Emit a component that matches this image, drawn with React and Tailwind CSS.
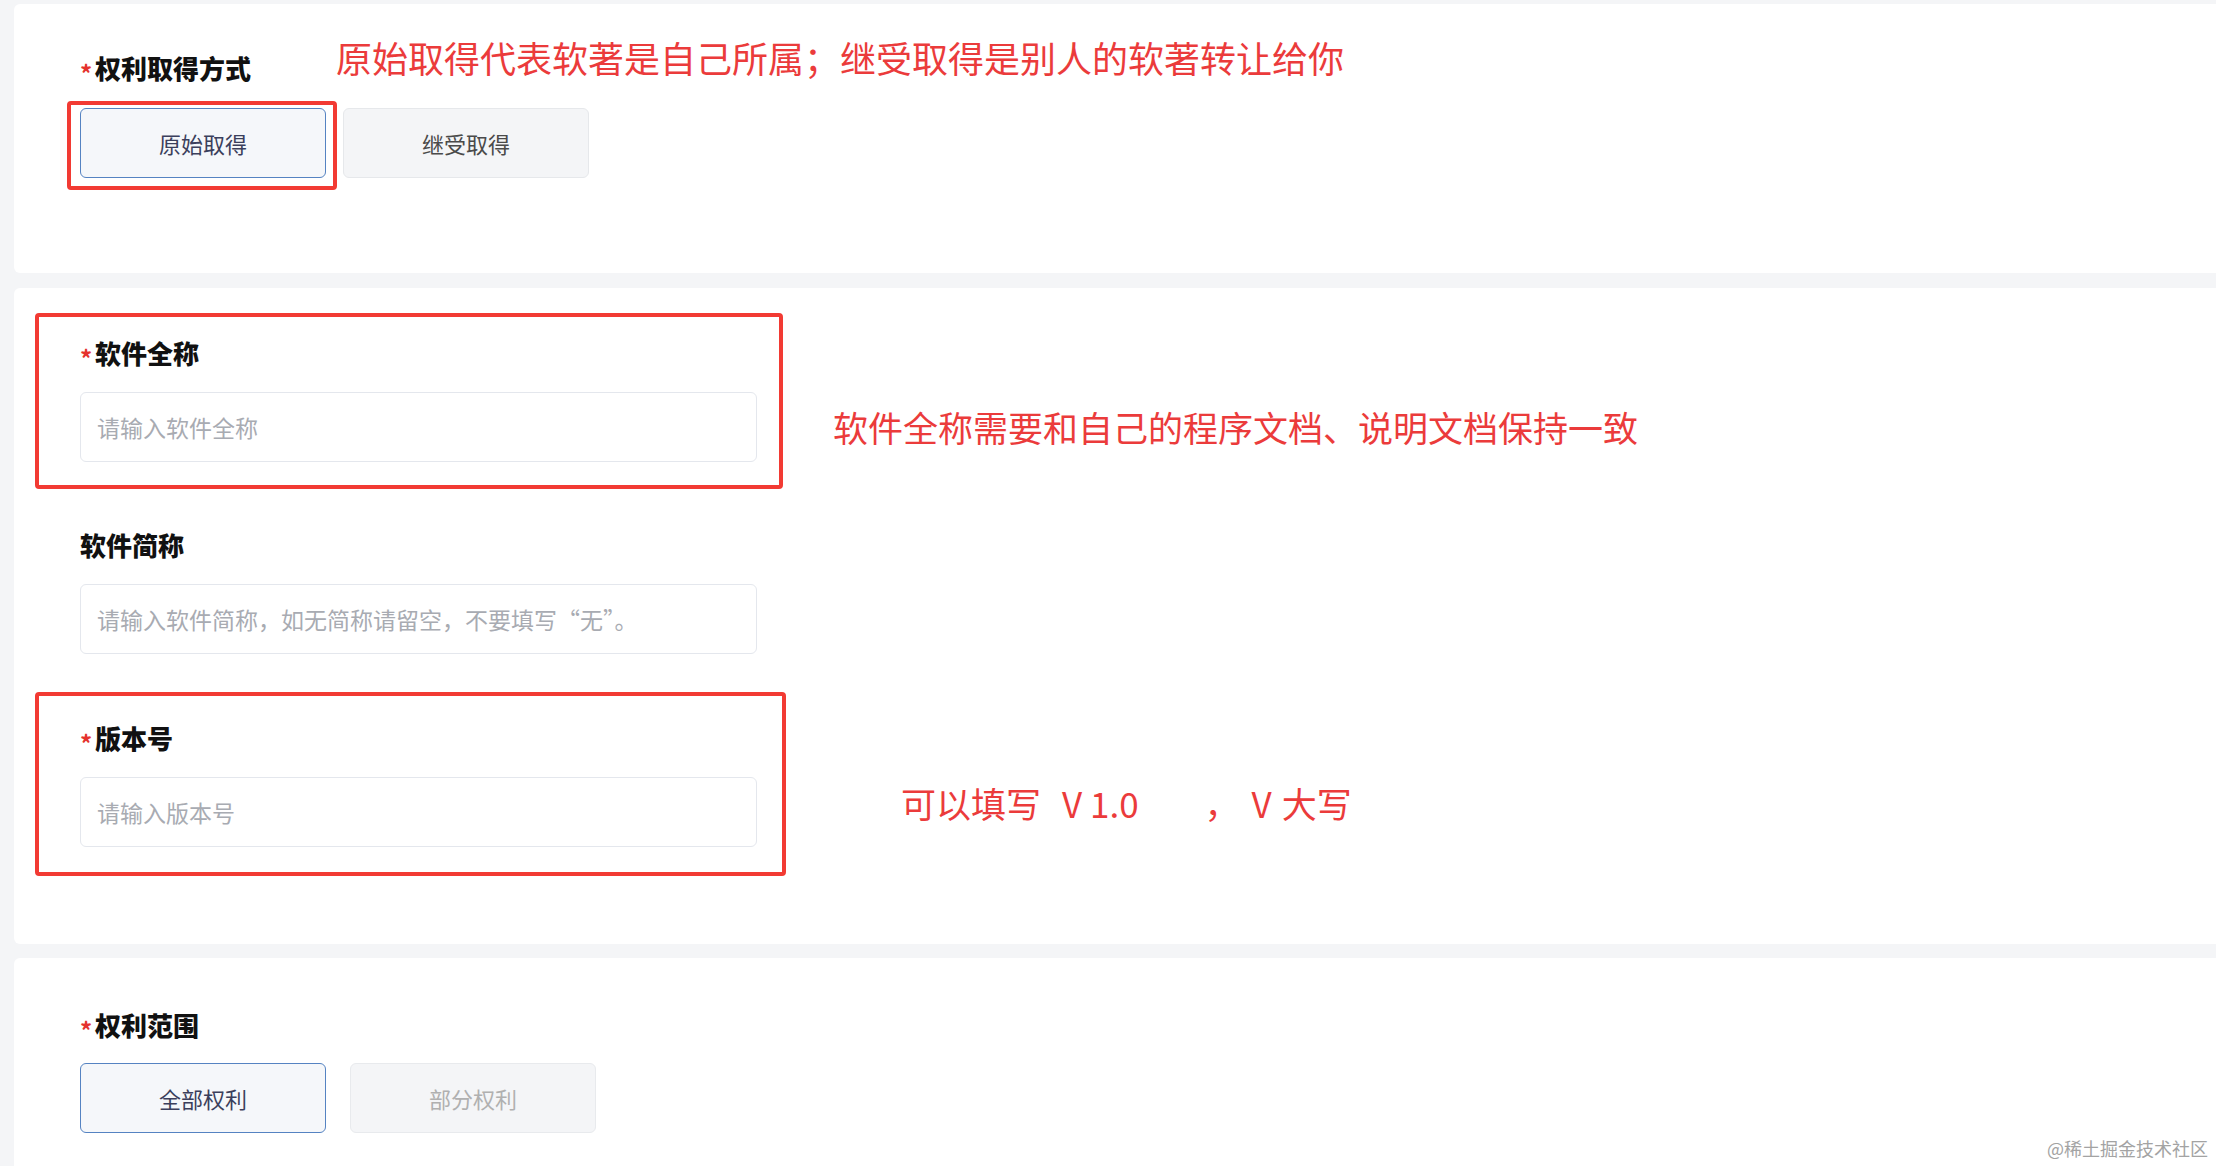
import React from "react";

const RedBox = ({ className }) => (
  <div
    className={`pointer-events-none absolute border-[4px] border-[#f23a33] rounded-[4px] ${className}`}
  />
);

const Label = ({ required, children }) => (
  <div className="flex items-center h-[36px] leading-[36px] text-[26px] font-black text-[#111]">
    {required && (
      <span className="w-[15px] text-[24px] text-[#e5322d] font-bold translate-y-[5px]">*</span>
    )}
    {children}
  </div>
);

const Choice = ({ selected, disabled, children }) => (
  <button
    type="button"
    className={`w-[246px] h-[70px] rounded-[6px] border text-[22px] ${
      selected
        ? "border-[#5583c2] bg-[#f5f7fa] text-[#3b3f5c]"
        : disabled
        ? "border-[#e8eaed] bg-[#f4f5f7] text-[#b0b0b0]"
        : "border-[#e6e8eb] bg-[#f4f5f7] text-[#4a4a4a]"
    }`}
  >
    {children}
  </button>
);

const TextInput = ({ placeholder }) => (
  <input
    placeholder={placeholder}
    className="w-[677px] h-[70px] rounded-[6px] border border-[#e4e7ed] bg-white px-[16px] text-[23px] text-[#333] placeholder:text-[#a8abb2] outline-none"
  />
);

export default function App() {
  return (
    <div className="relative h-[1166px] overflow-hidden bg-[#f4f5f7] pl-[14px] pt-[4px] font-['Noto_Sans_CJK_SC',sans-serif]">
      {/* 权利取得方式 */}
      <section className="h-[269px] rounded-l-[6px] bg-white pl-[66px] pt-[31px]">
        <div className="flex items-start">
          <div className="mt-[15px]">
            <Label required>权利取得方式</Label>
          </div>
          <p className="ml-[85px] text-[36px] leading-[44px] text-[#eb3b3b]">
            原始取得代表软著是自己所属；继受取得是别人的软著转让给你
          </p>
        </div>
        <div className="mt-[22px] flex gap-[17px]">
          <div className="relative">
            <Choice selected>原始取得</Choice>
            <RedBox className="-left-[13px] -right-[11px] -top-[7px] -bottom-[12px]" />
          </div>
          <Choice>继受取得</Choice>
        </div>
      </section>

      {/* 软件信息 */}
      <section className="mt-[15px] h-[656px] rounded-l-[6px] bg-white pl-[66px] pt-[47px]">
        <div>
          <Label required>软件全称</Label>
          <div className="mt-[21px] flex items-center">
            <div className="relative">
              <TextInput placeholder="请输入软件全称" />
              <RedBox className="-left-[45px] -right-[26px] -top-[79px] -bottom-[27px]" />
            </div>
            <p className="ml-[76px] text-[35px] leading-[44px] text-[#eb3b3b]">
              软件全称需要和自己的程序文档、说明文档保持一致
            </p>
          </div>
        </div>

        <div className="mt-[65px]">
          <Label>软件简称</Label>
          <div className="mt-[21px]">
            <TextInput placeholder="请输入软件简称，如无简称请留空，不要填写“无”。" />
          </div>
        </div>

        <div className="mt-[66px]">
          <Label required>版本号</Label>
          <div className="mt-[21px] flex items-center">
            <div className="relative">
              <TextInput placeholder="请输入版本号" />
              <RedBox className="-left-[45px] -right-[29px] -top-[85px] -bottom-[29px]" />
            </div>
            <p className="ml-[144px] mb-[18px] flex items-center text-[35px] leading-[44px] text-[#eb3b3b] whitespace-pre">
              <span>可以填写</span>
              <span className="ml-[21px]">V 1.0</span>
              <span className="ml-[66px]">，</span>
              <span className="ml-[12px]">V</span>
              <span className="ml-[10px]">大写</span>
            </p>
          </div>
        </div>
      </section>

      {/* 权利范围 */}
      <section className="mt-[14px] h-[400px] rounded-l-[6px] bg-white pl-[66px] pt-[49px]">
        <Label required>权利范围</Label>
        <div className="mt-[20px] flex gap-[24px]">
          <Choice selected>全部权利</Choice>
          <Choice disabled>部分权利</Choice>
        </div>
      </section>

      <div className="absolute bottom-[4px] right-[8px] text-[18px] text-[#a3a3a3]">
        @稀土掘金技术社区
      </div>
    </div>
  );
}
